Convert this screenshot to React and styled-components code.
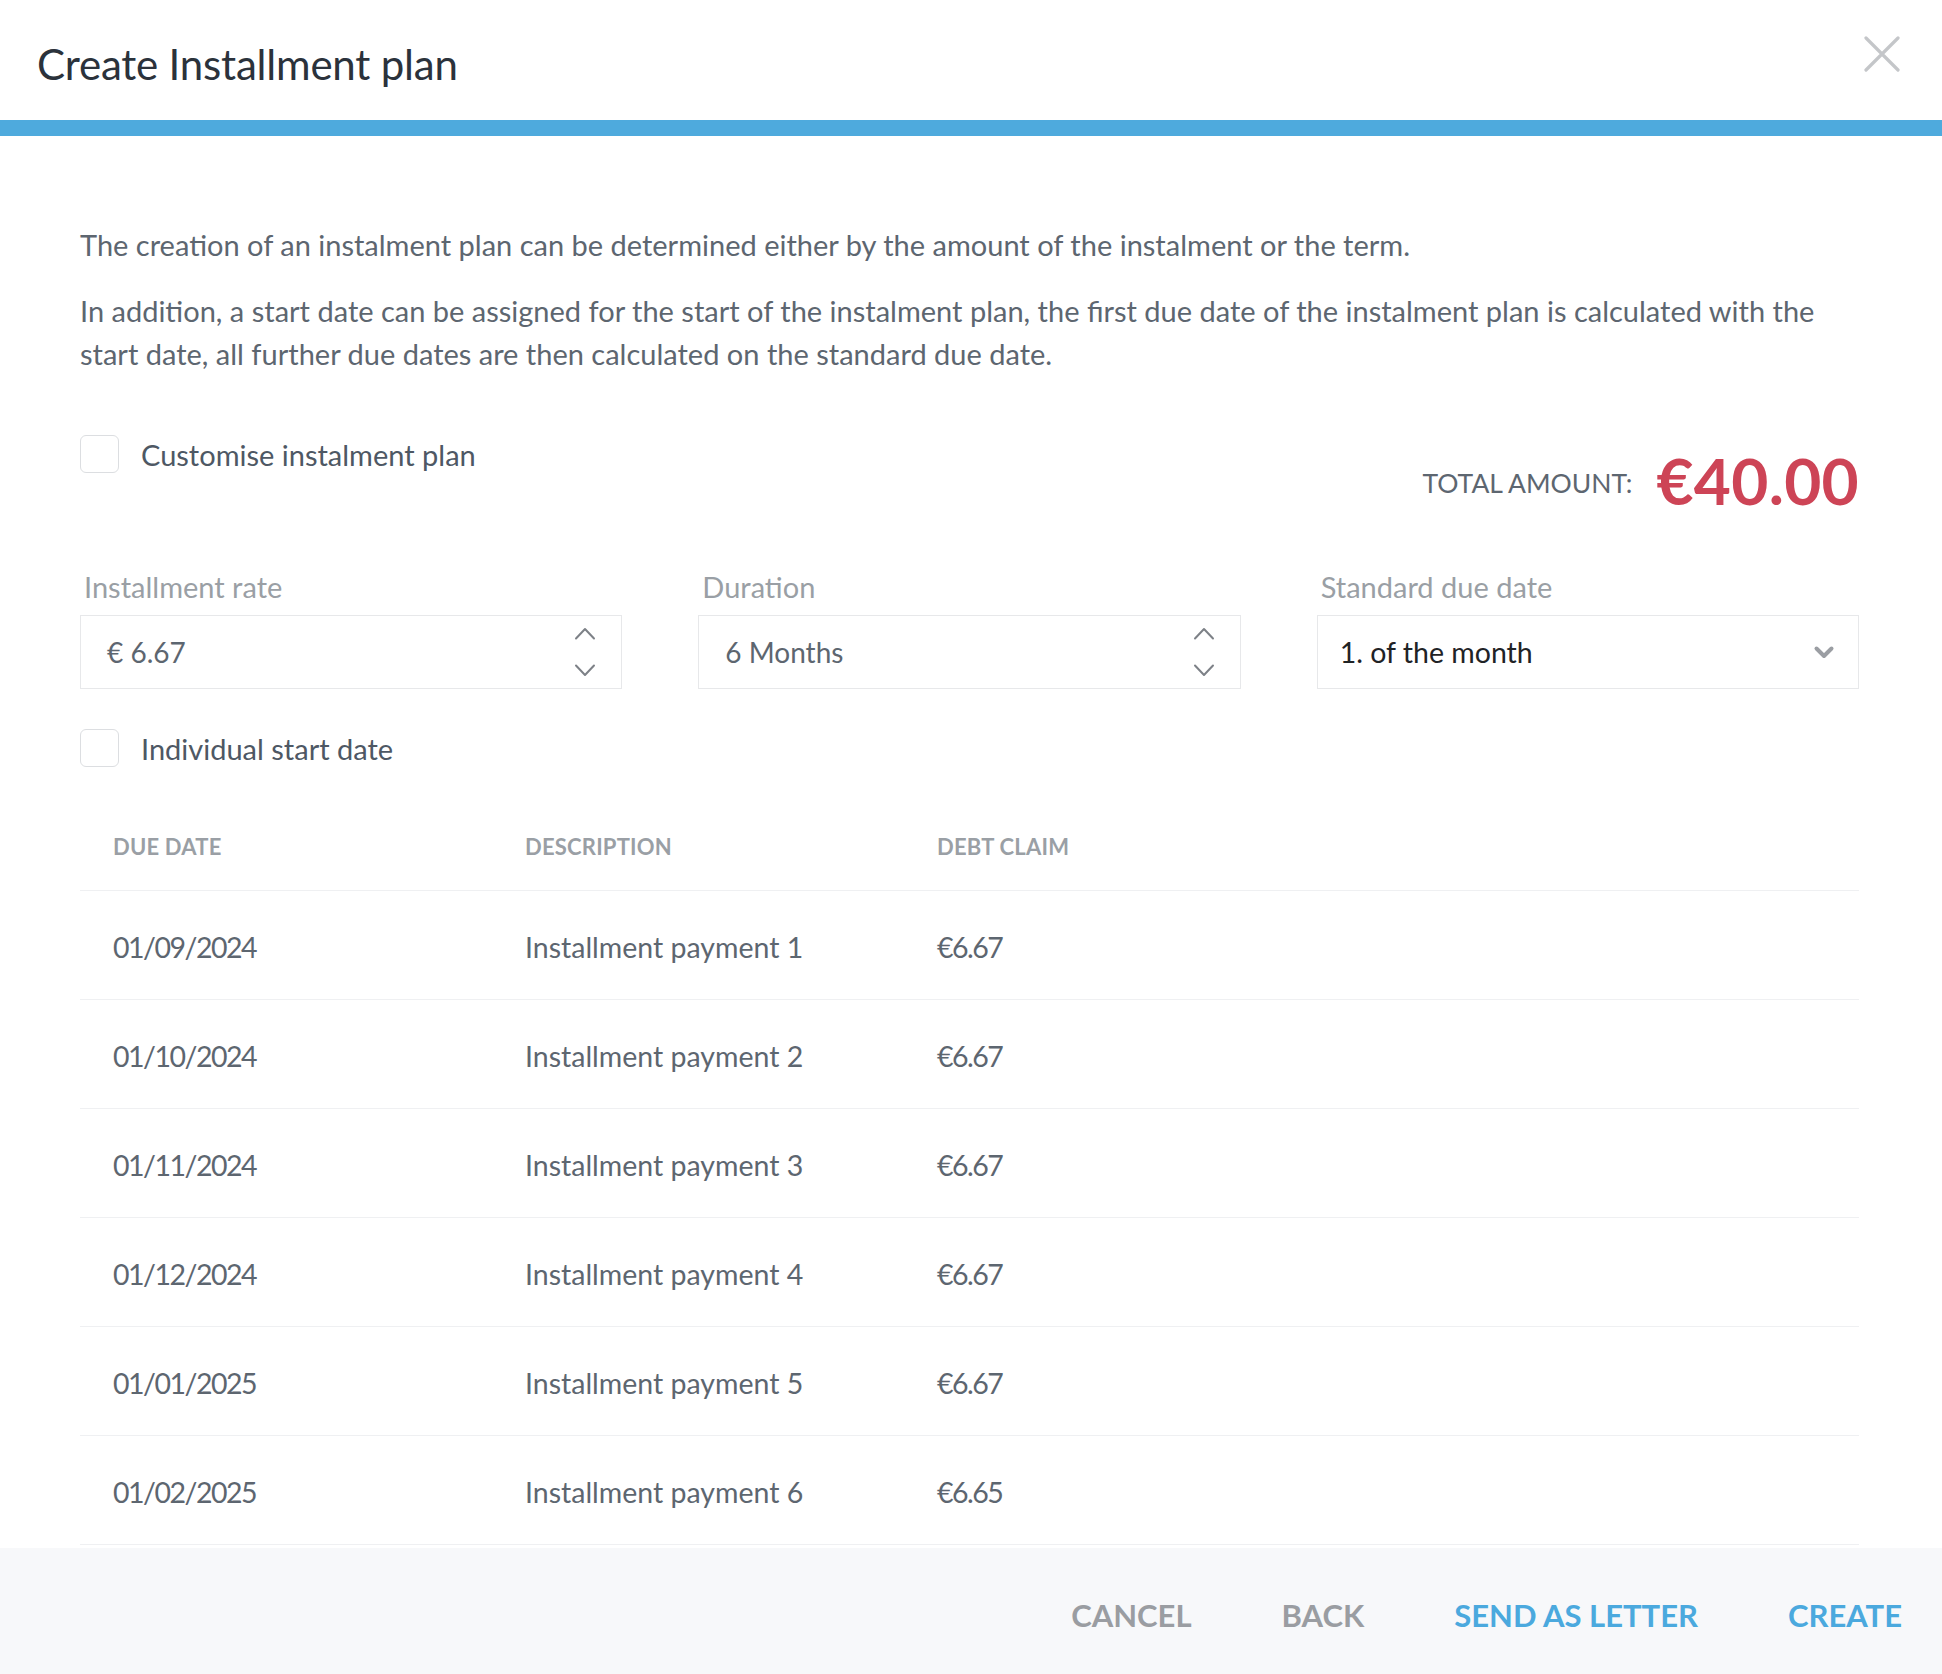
import React from "react";
import styled, { createGlobalStyle } from "styled-components";

const GlobalStyle = createGlobalStyle`
  html, body {
    margin: 0;
    padding: 0;
    background: #ffffff;
  }
  body {
    font-family: Lato, "Open Sans", sans-serif;
    -webkit-font-smoothing: antialiased;
  }
  * {
    box-sizing: border-box;
  }
`;

const rows = [
  { date: "01/09/2024", text: "Installment payment 1", amount: "€6.67" },
  { date: "01/10/2024", text: "Installment payment 2", amount: "€6.67" },
  { date: "01/11/2024", text: "Installment payment 3", amount: "€6.67" },
  { date: "01/12/2024", text: "Installment payment 4", amount: "€6.67" },
  { date: "01/01/2025", text: "Installment payment 5", amount: "€6.67" },
  { date: "01/02/2025", text: "Installment payment 6", amount: "€6.65" }
];

const ChevronUp = () => (
  <svg width="22" height="13" viewBox="0 0 22 13" fill="none">
    <path d="M2 11.5 L11 2 L20 11.5" stroke="#7d8187" strokeWidth="2" strokeLinecap="round" strokeLinejoin="round" />
  </svg>
);

const ChevronDown = () => (
  <svg width="22" height="13" viewBox="0 0 22 13" fill="none">
    <path d="M2 1.5 L11 11 L20 1.5" stroke="#7d8187" strokeWidth="2" strokeLinecap="round" strokeLinejoin="round" />
  </svg>
);

const SelectChevron = () => (
  <svg width="22" height="15" viewBox="0 0 22 15" fill="none">
    <path d="M3.5 3.5 L11 11 L18.5 3.5" stroke="#9b9ea3" strokeWidth="4" strokeLinecap="round" strokeLinejoin="round" />
  </svg>
);

const CloseIcon = () => (
  <svg width="36" height="36" viewBox="0 0 36 36" fill="none">
    <path d="M2 2 L34 34 M34 2 L2 34" stroke="#c4c6c9" strokeWidth="3.2" strokeLinecap="round" />
  </svg>
);

export default function App() {
  return (
    <>
      <GlobalStyle />
      <Modal>
        <Header>
          <Title>Create Installment plan</Title>
          <CloseButton aria-label="close">
            <CloseIcon />
          </CloseButton>
        </Header>
        <AccentBar />
        <Body>
          <Paragraph>
            The creation of an instalment plan can be determined either by the amount of the instalment or the term.
          </Paragraph>
          <Paragraph spaced>
            In addition, a start date can be assigned for the start of the instalment plan, the first due date of the
            instalment plan is calculated with the start date, all further due dates are then calculated on the
            standard due date.
          </Paragraph>

          <OptionsRow>
            <CheckRow>
              <Checkbox />
              <CheckLabel>Customise instalment plan</CheckLabel>
            </CheckRow>
            <Total>
              <TotalLabel>TOTAL AMOUNT:</TotalLabel>
              <TotalValue>€40.00</TotalValue>
            </Total>
          </OptionsRow>

          <Fields>
            <Field>
              <FieldLabel>Installment rate</FieldLabel>
              <InputBox>
                <InputText>€ 6.67</InputText>
                <Spinner>
                  <ChevronUp />
                  <ChevronDown />
                </Spinner>
              </InputBox>
            </Field>
            <Field>
              <FieldLabel>Duration</FieldLabel>
              <InputBox>
                <InputText>6 Months</InputText>
                <Spinner>
                  <ChevronUp />
                  <ChevronDown />
                </Spinner>
              </InputBox>
            </Field>
            <Field>
              <FieldLabel>Standard due date</FieldLabel>
              <InputBox select>
                <InputText dark>1. of the month</InputText>
                <SelectIcon>
                  <SelectChevron />
                </SelectIcon>
              </InputBox>
            </Field>
          </Fields>

          <CheckRow second>
            <Checkbox />
            <CheckLabel>Individual start date</CheckLabel>
          </CheckRow>

          <Table>
            <HeadRow>
              <HeadCell>Due date</HeadCell>
              <HeadCell>Description</HeadCell>
              <HeadCell>Debt claim</HeadCell>
            </HeadRow>
            {rows.map(r => (
              <Row key={r.text}>
                <Cell numeric>{r.date}</Cell>
                <Cell>{r.text}</Cell>
                <Cell numeric>{r.amount}</Cell>
              </Row>
            ))}
          </Table>
        </Body>
        <Footer>
          <FooterButton>Cancel</FooterButton>
          <FooterButton>Back</FooterButton>
          <FooterButton primary>Send as letter</FooterButton>
          <FooterButton primary>Create</FooterButton>
        </Footer>
      </Modal>
    </>
  );
}

const Modal = styled.div`
  width: 1942px;
  height: 1674px;
  display: flex;
  flex-direction: column;
  background: #ffffff;
  overflow: hidden;
`;

const Header = styled.div`
  height: 120px;
  flex-shrink: 0;
  display: flex;
  align-items: center;
  justify-content: space-between;
  padding: 0 42px 0 37px;
`;

const Title = styled.h1`
  margin: 0;
  font-size: 42px;
  font-weight: 400;
  color: #2b323b;
  letter-spacing: -0.2px;
  transform: translateY(4px);
`;

const CloseButton = styled.button`
  border: none;
  background: none;
  padding: 0;
  display: flex;
  align-self: flex-start;
  margin-top: 36px;
  cursor: pointer;
`;

const AccentBar = styled.div`
  height: 16px;
  background: #4eaadd;
  flex-shrink: 0;
`;

const Body = styled.div`
  flex: 1;
  min-height: 0;
  padding: 87px 83px 0 80px;
  display: flex;
  flex-direction: column;
`;

const Paragraph = styled.p`
  margin: ${p => (p.spaced ? "23px 0 0" : "0")};
  font-size: 29px;
  line-height: 43px;
  color: #5d6670;
`;

const OptionsRow = styled.div`
  display: flex;
  justify-content: space-between;
  align-items: flex-start;
  margin-top: 60px;
`;

const CheckRow = styled.div`
  display: flex;
  align-items: center;
  gap: 22px;
  height: 38px;
  margin-top: ${p => (p.second ? "40px" : "0")};
`;

const Checkbox = styled.span`
  width: 39px;
  height: 38px;
  border: 1.5px solid #dcdee1;
  border-radius: 6px;
  background: #fff;
  flex-shrink: 0;
`;

const CheckLabel = styled.span`
  font-size: 29px;
  color: #4e5864;
`;

const Total = styled.div`
  display: flex;
  align-items: center;
  gap: 24px;
  margin-top: 11px;
  height: 70px;
`;

const TotalLabel = styled.span`
  font-size: 26.5px;
  color: #5d6670;
  transform: translateY(2px);
`;

const TotalValue = styled.span`
  font-size: 64px;
  line-height: 70px;
  font-weight: 700;
  color: #cd4456;
  letter-spacing: 0.3px;
`;

const Fields = styled.div`
  display: grid;
  grid-template-columns: repeat(3, 1fr);
  column-gap: 76px;
  margin-top: 54px;
`;

const Field = styled.div`
  display: flex;
  flex-direction: column;
`;

const FieldLabel = styled.label`
  font-size: 29px;
  color: #9a9fa5;
  padding-left: 4px;
  line-height: 34px;
  margin-bottom: 11px;
`;

const InputBox = styled.div`
  height: 74px;
  border: 1.5px solid #e7e8ea;
  display: flex;
  align-items: center;
  justify-content: space-between;
  padding: ${p => (p.select ? "0 23px 0 22px" : "0 25px 0 26px")};
`;

const InputText = styled.span`
  font-size: ${p => (p.dark ? "28.5px" : "28px")};
  color: ${p => (p.dark ? "#1f2326" : "#5d6670")};
`;

const Spinner = styled.div`
  display: flex;
  flex-direction: column;
  gap: 24px;
`;

const SelectIcon = styled.div`
  display: flex;
`;

const Table = styled.div`
  display: flex;
  flex-direction: column;
`;

const HeadRow = styled.div`
  display: grid;
  grid-template-columns: 412px 412px 1fr;
  padding: 36px 0 0 33px;
  height: 124px;
  align-items: center;
  border-bottom: 1.5px solid #eff0f2;
`;

const HeadCell = styled.span`
  font-size: 22px;
  font-weight: 700;
  color: #9a9fa5;
  text-transform: uppercase;
  letter-spacing: 0.2px;
`;

const Row = styled.div`
  display: grid;
  grid-template-columns: 412px 412px 1fr;
  padding: 4px 0 0 33px;
  height: 109px;
  align-items: center;
  border-bottom: 1.5px solid #eff0f2;
`;

const Cell = styled.span`
  font-size: 28.5px;
  color: #5d6670;
  letter-spacing: ${p => (p.numeric ? "-1.5px" : "0")};
`;

const Footer = styled.div`
  height: 126px;
  flex-shrink: 0;
  background: #f7f8fa;
  display: flex;
  align-items: center;
  justify-content: flex-end;
  gap: 90px;
  padding: 7px 40px 0 0;
`;

const FooterButton = styled.button`
  border: none;
  background: none;
  padding: 0;
  font-family: inherit;
  font-size: 31px;
  font-weight: 700;
  text-transform: uppercase;
  color: ${p => (p.primary ? "#4ba9de" : "#9a9da2")};
  cursor: pointer;
`;
